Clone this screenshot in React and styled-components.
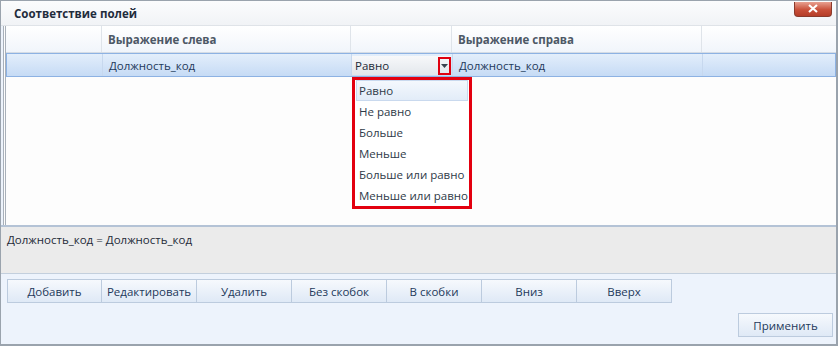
import React from "react";
import styled, { createGlobalStyle } from "styled-components";

const Global = createGlobalStyle`
  html, body { margin: 0; padding: 0; background: #fff; }
  body { font-family: "Open Sans", "Noto Sans", sans-serif; font-size: 11.5px; }
`;

const Window = styled.div`
  width: 838px;
  height: 346px;
  box-sizing: border-box;
  border: 1px solid #9aa3ad;
  border-right-width: 2px;
  border-bottom-width: 2px;
  background: #edf3fc;
  display: flex;
  flex-direction: column;
  overflow: hidden;
`;

const TitleBar = styled.div`
  height: 24px;
  flex: none;
  display: flex;
  align-items: center;
  justify-content: space-between;
  padding: 0 4px 0 13px;
  background: linear-gradient(#fbfcfd, #f1f3f6);
  border-bottom: 1px solid #dfe3e8;
  & > span {
    font-weight: 700;
    font-size: 11.5px;
    color: #1f2c3c;
  }
`;

const CloseBtn = styled.div`
  width: 36px;
  height: 14px;
  margin-top: -8px;
  border-radius: 0 0 4px 4px;
  background: linear-gradient(#e8a090, #c9503a 55%, #b53d28);
  border: 1px solid #8a3a2c;
  border-top: none;
  display: flex;
  align-items: center;
  justify-content: center;
`;

const Grid = styled.div`
  height: 199px;
  flex: none;
  margin-left: 2px;
  border-left: 3px double #a8b0ba;
  background: #fdfdfd;
  position: relative;
`;

const Row = styled.div`
  display: grid;
  grid-template-columns: 96px 249px 101px 250px 1fr;
  height: ${(p) => (p.$head ? "27px" : "24px")};
  box-sizing: border-box;
  background: ${(p) =>
    p.$head
      ? "linear-gradient(#ffffff, #f1f5fb)"
      : "linear-gradient(#e3eefb, #c6dbf5)"};
  border: ${(p) => (p.$head ? "none" : "1px solid #8db2e3")};
  border-bottom: 1px solid ${(p) => (p.$head ? "#d5dce5" : "#8db2e3")};
`;

const Cell = styled.div`
  display: flex;
  align-items: center;
  padding-left: 6px;
  border-right: 1px solid ${(p) => (p.$head ? "#dfe4ea" : "#c7d8ee")};
  font-weight: ${(p) => (p.$head ? 700 : 400)};
  color: ${(p) => (p.$head ? "#4d5866" : "#1e395b")};
  white-space: nowrap;
  &:last-child { border-right: none; }
`;

const Combo = styled.div`
  position: absolute;
  left: 346px;
  top: 30px;
  width: 99px;
  height: 19px;
  box-sizing: border-box;
  background: linear-gradient(#f7f8fa, #e3e7ec);
  display: flex;
  align-items: center;
  justify-content: space-between;
  padding-left: 3px;
  color: #1e2a38;
`;

const ArrowBox = styled.div`
  width: 13px;
  height: 18px;
  box-sizing: border-box;
  border: 2px solid #e0000f;
  display: flex;
  align-items: center;
  justify-content: center;
`;

const List = styled.div`
  position: absolute;
  left: 346px;
  top: 51px;
  width: 120px;
  box-sizing: border-box;
  border: 3px solid #e3000f;
  background: #fff;
`;

const Item = styled.div`
  height: 21px;
  box-sizing: border-box;
  display: flex;
  align-items: center;
  padding-left: 2px;
  margin: 0 1px;
  white-space: nowrap;
  color: #2e3a48;
  background: ${(p) => (p.$active ? "linear-gradient(#f4f8fd, #e2ecf8)" : "transparent")};
  border: 1px solid ${(p) => (p.$active ? "#c9d9ee" : "transparent")};
`;

const Expr = styled.div`
  height: 49px;
  flex: none;
  background: #ebebeb;
  border-top: 2px solid #b4c3d6;
  border-bottom: 1px solid #c3cfdd;
  padding: 5px 6px;
  box-sizing: border-box;
  color: #1e2a38;
`;

const Buttons = styled.div`
  display: flex;
  padding: 5px 0 0 6px;
`;

const Btn = styled.div`
  width: 95px;
  height: 24px;
  box-sizing: border-box;
  border: 1px solid #bccbde;
  border-left-width: ${(p) => (p.$first ? 1 : 0)}px;
  background: linear-gradient(#f6f9fd, #dfe9f6);
  display: flex;
  align-items: center;
  justify-content: center;
  color: #1e395b;
`;

const Footer = styled.div`
  display: flex;
  justify-content: flex-end;
  padding: 10px 3px 0 0;
`;

const ops = ["Равно", "Не равно", "Больше", "Меньше", "Больше или равно", "Меньше или равно"];
const btns = ["Добавить", "Редактировать", "Удалить", "Без скобок", "В скобки", "Вниз", "Вверх"];

export default function App() {
  return (
    <>
      <Global />
      <Window>
        <TitleBar>
          <span>Соответствие полей</span>
          <CloseBtn>
            <svg width="12" height="9" viewBox="0 0 12 9">
              <path d="M2 1 L10 8 M10 1 L2 8" stroke="#fff" strokeWidth="2.2" />
            </svg>
          </CloseBtn>
        </TitleBar>
        <Grid>
          <Row $head>
            <Cell $head />
            <Cell $head>Выражение слева</Cell>
            <Cell $head />
            <Cell $head>Выражение справа</Cell>
            <Cell $head />
          </Row>
          <Row>
            <Cell />
            <Cell>Должность_код</Cell>
            <Cell />
            <Cell>Должность_код</Cell>
            <Cell />
          </Row>
          <Combo>
            <span>Равно</span>
            <ArrowBox>
              <svg width="7" height="4" viewBox="0 0 7 4">
                <path d="M0 0 H7 L3.5 4 Z" fill="#3a4450" />
              </svg>
            </ArrowBox>
          </Combo>
          <List>
            {ops.map((o, i) => (
              <Item key={o} $active={i === 0}>{o}</Item>
            ))}
          </List>
        </Grid>
        <Expr>Должность_код = Должность_код</Expr>
        <Buttons>
          {btns.map((b, i) => (
            <Btn key={b} $first={i === 0}>{b}</Btn>
          ))}
        </Buttons>
        <Footer>
          <Btn $first>Применить</Btn>
        </Footer>
      </Window>
    </>
  );
}
